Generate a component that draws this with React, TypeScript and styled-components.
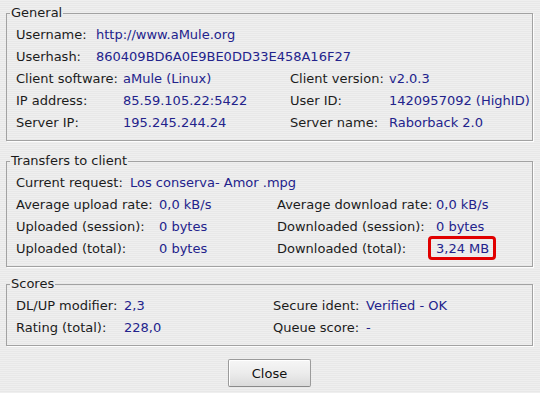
import * as React from 'react';
import styled, { createGlobalStyle } from 'styled-components';

const colors = {
  label: '#1c1c1c',
  value: '#23238c',
  border: '#a2a2a2',
  stripeA: '#efefef',
  stripeB: '#e8e8e8',
  mark: '#e10000',
};

const GlobalStyle = createGlobalStyle`
  html, body {
    margin: 0;
    padding: 0;
  }

  body {
    width: 540px;
    height: 393px;
    overflow: hidden;
    font-family: 'DejaVu Sans', 'Liberation Sans', sans-serif;
    font-size: 13px;
    color: ${colors.label};
    background: repeating-linear-gradient(
      to bottom,
      ${colors.stripeA} 0px,
      ${colors.stripeA} 1px,
      ${colors.stripeB} 1px,
      ${colors.stripeB} 2px
    );
  }
`;

const Dialog = styled.div`
  display: flex;
  flex-direction: column;
  padding: 6px 7px 0 6px;
`;

const Frame = styled.fieldset<{ $gap: number }>`
  margin: ${(p) => p.$gap}px 0 0 0;
  padding: 0 0 6px 0;
  border: 1px solid ${colors.border};
  box-shadow: 1px 1px 0 rgba(255, 255, 255, 0.9);
  min-width: 0;
`;

const Legend = styled.legend`
  margin-left: 3px;
  padding: 0 1px;
  line-height: 14px;
  color: ${colors.label};
`;

const Body = styled.div`
  padding: 4px 9px 0 9px;
`;

const Grid = styled.div<{ $cols: string }>`
  display: grid;
  grid-template-columns: ${(p) => p.$cols};
  grid-auto-rows: 22px;
  align-items: center;
  line-height: 22px;
  white-space: nowrap;
`;

const Label = styled.span`
  color: ${colors.label};
`;

const Value = styled.span<{ $marked?: boolean }>`
  color: ${colors.value};
  justify-self: start;
  position: relative;

  ${(p) =>
    p.$marked &&
    `
    &::after {
      content: '';
      position: absolute;
      left: -8px;
      right: -7px;
      top: -2px;
      bottom: 0;
      border: 3px solid ${colors.mark};
      border-radius: 4px;
    }
  `}
`;

const Footer = styled.div`
  display: flex;
  justify-content: center;
  padding-top: 13px;
`;

const Button = styled.button`
  width: 83px;
  height: 28px;
  font-family: inherit;
  font-size: 13px;
  color: #111;
  border: 1px solid #9b9b9b;
  border-bottom-color: #8a8a8a;
  border-radius: 2px;
  background: linear-gradient(to bottom, #f6f6f6 0%, #ececec 50%, #dadada 100%);
  box-shadow: inset 1px 1px 0 #ffffff;
  padding: 0;
  cursor: pointer;
`;

type Cell = { label: string; value: string; marked?: boolean };

const Rows = ({ cols, rows }: { cols: string; rows: Cell[][] }) => (
  <Grid $cols={cols}>
    {rows.map((row) =>
      row.map((cell) => (
        <React.Fragment key={cell.label}>
          <Label>{cell.label}</Label>
          <Value $marked={cell.marked}>{cell.value}</Value>
        </React.Fragment>
      )),
    )}
  </Grid>
);

const App = () => (
  <>
    <GlobalStyle />
    <Dialog>
      <Frame $gap={0}>
        <Legend>General</Legend>
        <Body>
          <Rows
            cols="80px 1fr"
            rows={[
              [{ label: 'Username:', value: 'http://www.aMule.org' }],
              [{ label: 'Userhash:', value: '860409BD6A0E9BE0DD33E458A16F27' }],
            ]}
          />
          <Rows
            cols="107px 167px 99px 1fr"
            rows={[
              [
                { label: 'Client software:', value: 'aMule (Linux)' },
                { label: 'Client version:', value: 'v2.0.3' },
              ],
              [
                { label: 'IP address:', value: '85.59.105.22:5422' },
                { label: 'User ID:', value: '1420957092 (HighID)' },
              ],
              [
                { label: 'Server IP:', value: '195.245.244.24' },
                { label: 'Server name:', value: 'Raborback 2.0' },
              ],
            ]}
          />
        </Body>
      </Frame>

      <Frame $gap={13}>
        <Legend>Transfers to client</Legend>
        <Body>
          <Rows
            cols="114px 1fr"
            rows={[[{ label: 'Current request:', value: 'Los conserva- Amor .mpg' }]]}
          />
          <Rows
            cols="143px 118px 159px 1fr"
            rows={[
              [
                { label: 'Average upload rate:', value: '0,0 kB/s' },
                { label: 'Average download rate:', value: '0,0 kB/s' },
              ],
              [
                { label: 'Uploaded (session):', value: '0 bytes' },
                { label: 'Downloaded (session):', value: '0 bytes' },
              ],
              [
                { label: 'Uploaded (total):', value: '0 bytes' },
                { label: 'Downloaded (total):', value: '3,24 MB', marked: true },
              ],
            ]}
          />
        </Body>
      </Frame>

      <Frame $gap={10}>
        <Legend>Scores</Legend>
        <Body>
          <Rows
            cols="108px 149px 93px 1fr"
            rows={[
              [
                { label: 'DL/UP modifier:', value: '2,3' },
                { label: 'Secure ident:', value: 'Verified - OK' },
              ],
              [
                { label: 'Rating (total):', value: '228,0' },
                { label: 'Queue score:', value: '-' },
              ],
            ]}
          />
        </Body>
      </Frame>

      <Footer>
        <Button type="button">Close</Button>
      </Footer>
    </Dialog>
  </>
);

export default App;
